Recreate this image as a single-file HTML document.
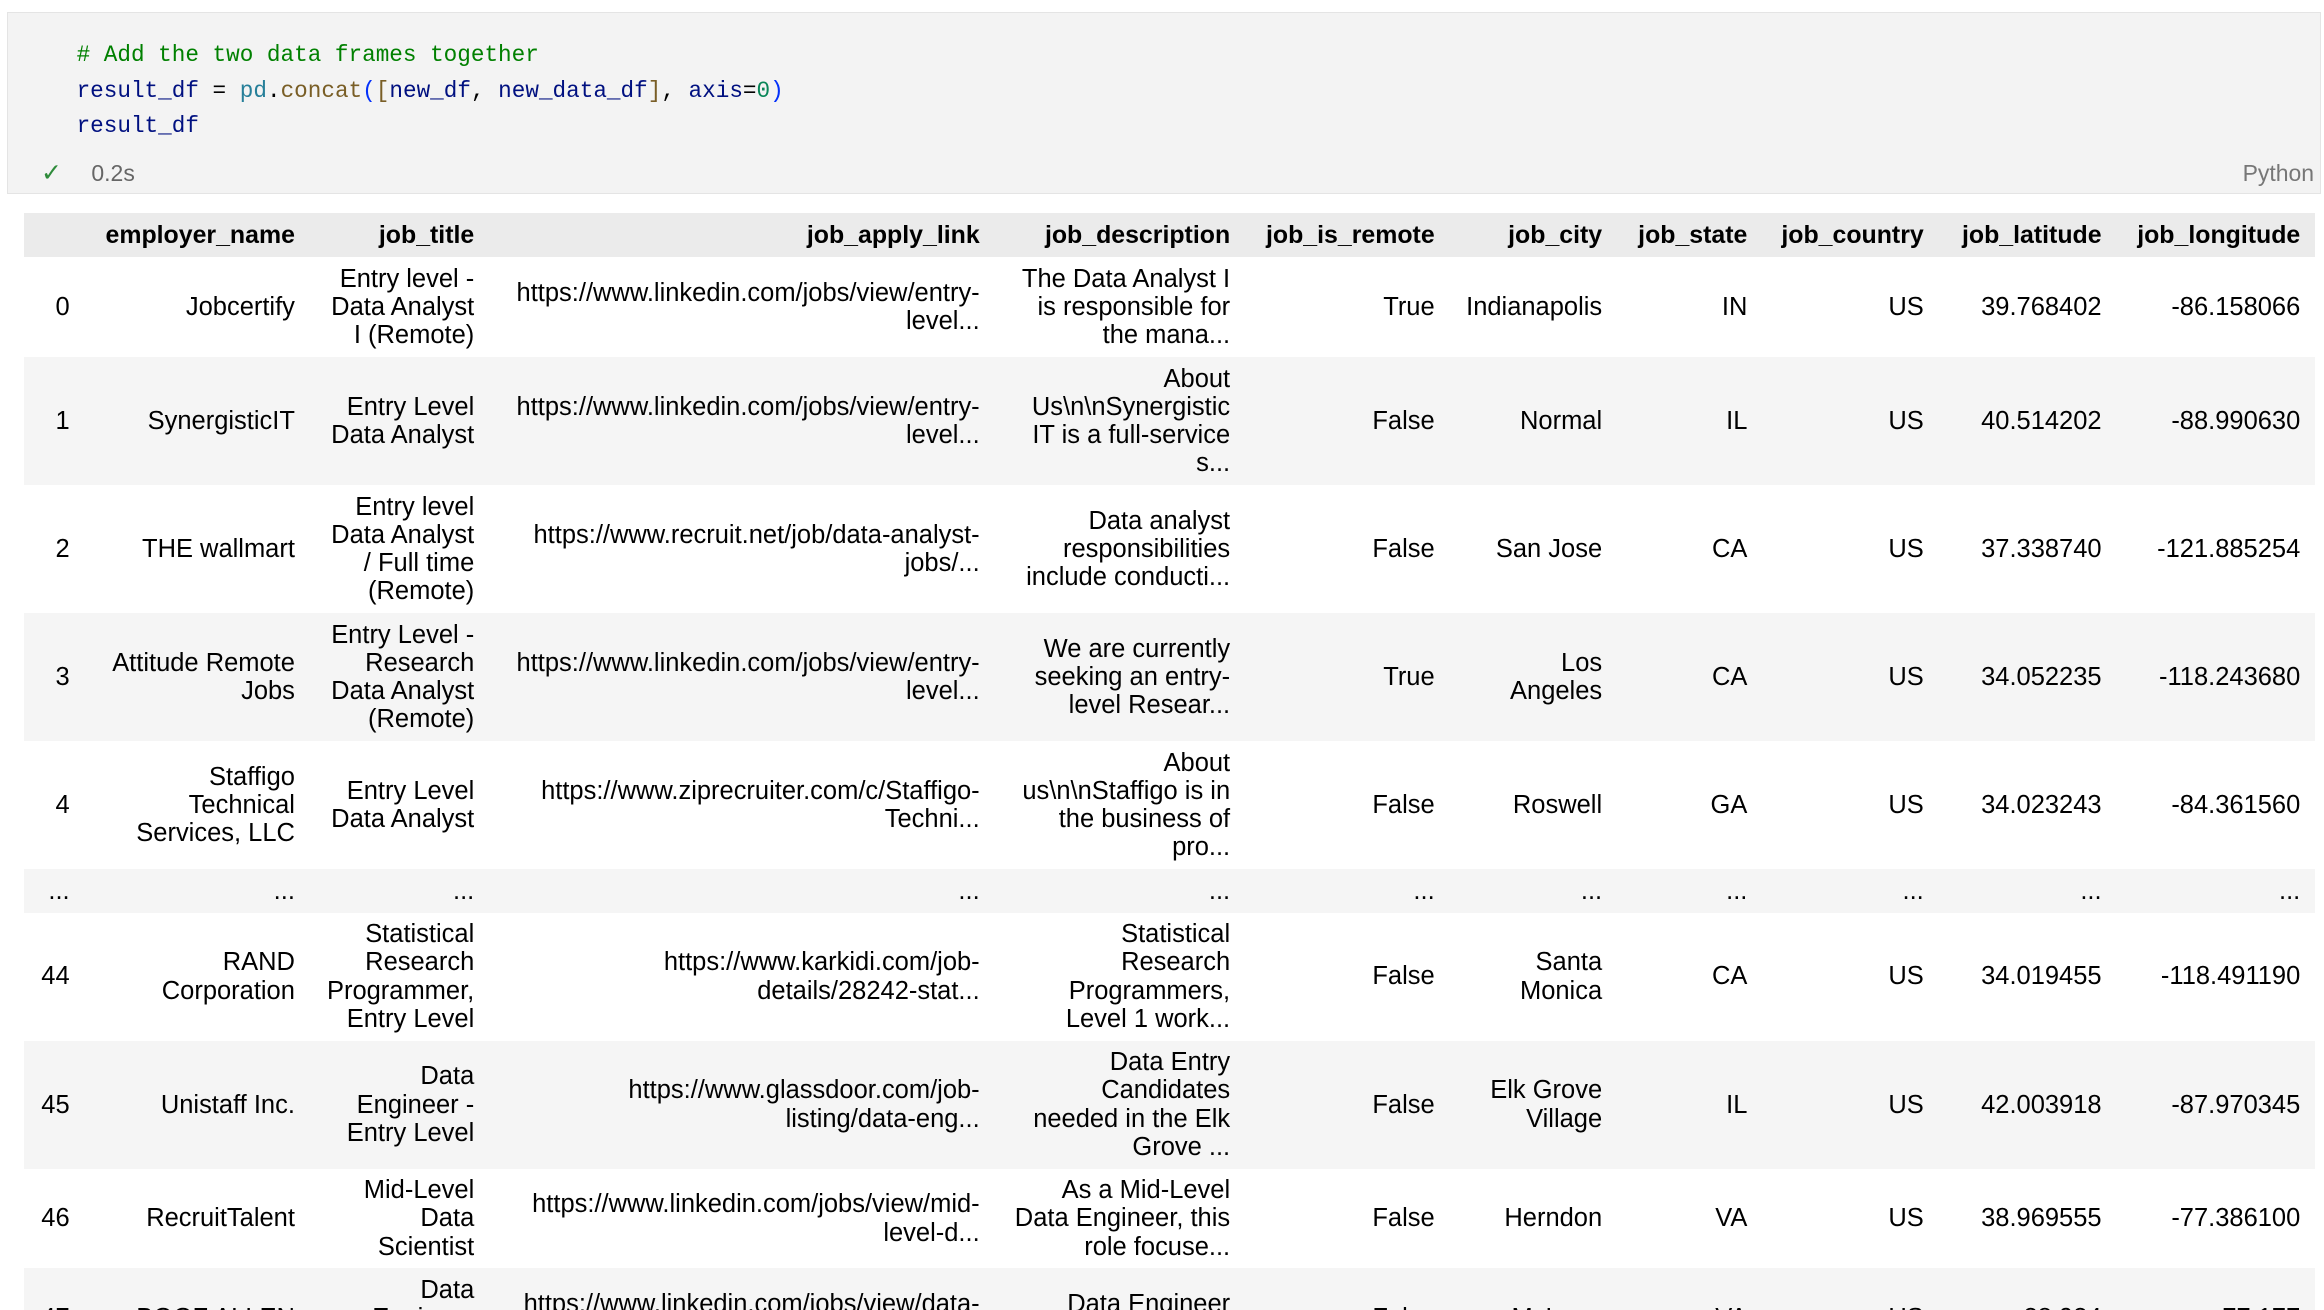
<!DOCTYPE html>
<html><head><meta charset="utf-8"><style>
html,body{margin:0;padding:0;background:#fff;overflow:hidden;width:2324px;height:1310px}
#w{zoom:1.48214;width:1568px;height:884px;position:relative;font-family:"Liberation Sans",Arial,sans-serif;color:#000}
.cell{position:absolute;left:5px;top:8px;width:1561px;height:123px;background:#f3f3f3;border:1px solid #e4e4e4;box-sizing:border-box}
.code{position:absolute;left:46px;top:17px;font-family:"Liberation Mono",monospace;font-size:15.3px;line-height:24px;white-space:pre;color:#001080}
.cm{color:#008000}.cls{color:#267f99}.fn{color:#795e26}.br{color:#0431fa}.num{color:#098658}.p{color:#000}
.chk{position:absolute;left:22px;top:98px;color:#2e8b3a;font-size:17px}
.time{position:absolute;left:56px;top:99px;color:#666;font-size:15.5px}
.py{position:absolute;right:4px;top:99px;color:#777;font-size:15.5px}
table{position:absolute;left:16px;top:144px;border-collapse:collapse;table-layout:fixed;width:1546px;font-size:17.2px;line-height:19px}
th,td{padding:5.2px 10px;text-align:right;vertical-align:middle;white-space:nowrap;overflow:visible}
th{font-weight:bold;background:#ebebeb;font-size:16.8px}
tbody tr:nth-child(even){background:#f5f5f5}
td.i{padding-right:13px}
</style></head><body><div id="w">
<div class="cell">
<div class="code"><span class="cm"># Add the two data frames together</span>
result_df <span class="p">=</span> <span class="cls">pd</span><span class="p">.</span><span class="fn">concat</span><span class="br">(</span><span class="fn">[</span>new_df<span class="p">,</span> new_data_df<span class="fn">]</span><span class="p">,</span> axis<span class="p">=</span><span class="num">0</span><span class="br">)</span>
result_df</div>
<div class="chk">✓</div><div class="time">0.2s</div><div class="py">Python</div>
</div>
<table>
<colgroup><col style="width:44px"><col style="width:149px"><col style="width:121px"><col style="width:341px"><col style="width:169px"><col style="width:138px"><col style="width:113px"><col style="width:98px"><col style="width:119px"><col style="width:120px"><col style="width:134px"></colgroup>
<thead><tr><th></th><th>employer_name</th><th>job_title</th><th>job_apply_link</th><th>job_description</th><th>job_is_remote</th><th>job_city</th><th>job_state</th><th>job_country</th><th>job_latitude</th><th>job_longitude</th></tr></thead>
<tbody>
<tr><td class="i">0</td><td>Jobcertify</td><td>Entry level -<br>Data Analyst<br>I (Remote)</td><td>https://www.linkedin.com/jobs/view/entry-<br>level...</td><td>The Data Analyst I<br>is responsible for<br>the mana...</td><td>True</td><td>Indianapolis</td><td>IN</td><td>US</td><td>39.768402</td><td>-86.158066</td></tr>
<tr><td class="i">1</td><td>SynergisticIT</td><td>Entry Level<br>Data Analyst</td><td>https://www.linkedin.com/jobs/view/entry-<br>level...</td><td>About<br>Us\n\nSynergistic<br>IT is a full-service<br>s...</td><td>False</td><td>Normal</td><td>IL</td><td>US</td><td>40.514202</td><td>-88.990630</td></tr>
<tr><td class="i">2</td><td>THE wallmart</td><td>Entry level<br>Data Analyst<br>/ Full time<br>(Remote)</td><td>https://www.recruit.net/job/data-analyst-<br>jobs/...</td><td>Data analyst<br>responsibilities<br>include conducti...</td><td>False</td><td>San Jose</td><td>CA</td><td>US</td><td>37.338740</td><td>-121.885254</td></tr>
<tr><td class="i">3</td><td>Attitude Remote<br>Jobs</td><td>Entry Level -<br>Research<br>Data Analyst<br>(Remote)</td><td>https://www.linkedin.com/jobs/view/entry-<br>level...</td><td>We are currently<br>seeking an entry-<br>level Resear...</td><td>True</td><td>Los<br>Angeles</td><td>CA</td><td>US</td><td>34.052235</td><td>-118.243680</td></tr>
<tr><td class="i">4</td><td>Staffigo<br>Technical<br>Services, LLC</td><td>Entry Level<br>Data Analyst</td><td>https://www.ziprecruiter.com/c/Staffigo-<br>Techni...</td><td>About<br>us\n\nStaffigo is in<br>the business of<br>pro...</td><td>False</td><td>Roswell</td><td>GA</td><td>US</td><td>34.023243</td><td>-84.361560</td></tr>
<tr><td class="i">...</td><td>...</td><td>...</td><td>...</td><td>...</td><td>...</td><td>...</td><td>...</td><td>...</td><td>...</td><td>...</td></tr>
<tr><td class="i">44</td><td>RAND<br>Corporation</td><td>Statistical<br>Research<br>Programmer,<br>Entry Level</td><td>https://www.karkidi.com/job-<br>details/28242-stat...</td><td>Statistical<br>Research<br>Programmers,<br>Level 1 work...</td><td>False</td><td>Santa<br>Monica</td><td>CA</td><td>US</td><td>34.019455</td><td>-118.491190</td></tr>
<tr><td class="i">45</td><td>Unistaff Inc.</td><td>Data<br>Engineer -<br>Entry Level</td><td>https://www.glassdoor.com/job-<br>listing/data-eng...</td><td>Data Entry<br>Candidates<br>needed in the Elk<br>Grove ...</td><td>False</td><td>Elk Grove<br>Village</td><td>IL</td><td>US</td><td>42.003918</td><td>-87.970345</td></tr>
<tr><td class="i">46</td><td>RecruitTalent</td><td>Mid-Level<br>Data<br>Scientist</td><td>https://www.linkedin.com/jobs/view/mid-<br>level-d...</td><td>As a Mid-Level<br>Data Engineer, this<br>role focuse...</td><td>False</td><td>Herndon</td><td>VA</td><td>US</td><td>38.969555</td><td>-77.386100</td></tr>
<tr><td class="i">47</td><td>BOOZ ALLEN</td><td>Data<br>Engineer<br>Entry</td><td>https://www.linkedin.com/jobs/view/data-<br>eng...</td><td>Data Engineer<br>Entry Level...</td><td>False</td><td>McLean</td><td>VA</td><td>US</td><td>38.934</td><td>-77.177</td></tr>
</tbody></table>
</div></body></html>
